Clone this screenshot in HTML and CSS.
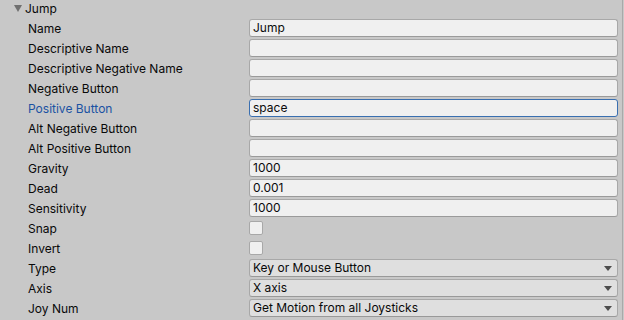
FILE: index.html
```html
<!DOCTYPE html>
<html lang="en">
<head>
  <meta charset="UTF-8" />
  <title>Input Manager - Jump</title>
  <link rel="stylesheet" href="styles.css">
</head>
<body>
  <div class="inspector">
    <div class="panel">
      <!-- Axis foldout -->
      <div class="foldout">
        <span class="foldout-arrow"></span>
        <span>Jump</span>
      </div>

      <div class="prop">
        <label class="prop-label">Name</label>
        <div class="text-field">Jump</div>
      </div>
      <div class="prop">
        <label class="prop-label">Descriptive Name</label>
        <div class="text-field"></div>
      </div>
      <div class="prop">
        <label class="prop-label">Descriptive Negative Name</label>
        <div class="text-field"></div>
      </div>
      <div class="prop">
        <label class="prop-label">Negative Button</label>
        <div class="text-field"></div>
      </div>
      <div class="prop focused">
        <label class="prop-label">Positive Button</label>
        <div class="text-field">space</div>
      </div>
      <div class="prop">
        <label class="prop-label">Alt Negative Button</label>
        <div class="text-field"></div>
      </div>
      <div class="prop">
        <label class="prop-label">Alt Positive Button</label>
        <div class="text-field"></div>
      </div>
      <div class="prop">
        <label class="prop-label">Gravity</label>
        <div class="text-field">1000</div>
      </div>
      <div class="prop">
        <label class="prop-label">Dead</label>
        <div class="text-field">0.001</div>
      </div>
      <div class="prop">
        <label class="prop-label">Sensitivity</label>
        <div class="text-field">1000</div>
      </div>
      <div class="prop">
        <label class="prop-label">Snap</label>
        <div class="toggle"></div>
      </div>
      <div class="prop">
        <label class="prop-label">Invert</label>
        <div class="toggle"></div>
      </div>
      <div class="prop">
        <label class="prop-label">Type</label>
        <div class="popup">Key or Mouse Button<span class="popup-arrow"></span></div>
      </div>
      <div class="prop">
        <label class="prop-label">Axis</label>
        <div class="popup">X axis<span class="popup-arrow"></span></div>
      </div>
      <div class="prop">
        <label class="prop-label">Joy Num</label>
        <div class="popup">Get Motion from all Joysticks<span class="popup-arrow"></span></div>
      </div>
    </div>
  </div>
</body>
</html>
```

FILE: styles.css
```css
body {
  margin: 0;
  background-color: #c8c8c8;
  font-family: Inter, "Noto Sans", sans-serif;
  font-size: 12px;
  color: #090909;
}

.inspector {
  display: flex;
  height: 320px;
  overflow: hidden;
}

.panel {
  width: 622px;
  border-right: 1px solid #a9a9a9;
}

.foldout {
  display: flex;
  align-items: center;
  height: 16px;
  margin-bottom: 2px;
  padding-left: 14px;
  gap: 3px;
}

.foldout-arrow {
  width: 0;
  height: 0;
  border-left: 4px solid transparent;
  border-right: 4px solid transparent;
  border-top: 7px solid #707070;
}

.prop {
  display: flex;
  align-items: center;
  height: 20px;
  padding-right: 4px;
}

.prop-label {
  width: 221px;
  padding-left: 28px;
  flex-shrink: 0;
  white-space: nowrap;
}

.prop.focused .prop-label {
  color: #1b52a3;
}

.text-field {
  flex: 1;
  box-sizing: border-box;
  height: 18px;
  line-height: 16px;
  padding-left: 3px;
  background: #f0f0f0;
  border: 1px solid #a8a8a8;
  border-bottom-color: #9a9a9a;
  border-radius: 3px;
  color: #0b0b0b;
}

.prop.focused .text-field {
  border-color: #3a6fb0;
}

.toggle {
  box-sizing: border-box;
  width: 14px;
  height: 14px;
  background: #f0f0f0;
  border: 1px solid #a8a8a8;
  border-radius: 2px;
}

.popup {
  flex: 1;
  position: relative;
  box-sizing: border-box;
  height: 18px;
  line-height: 16px;
  padding-left: 3px;
  background: #dfdfdf;
  border: 1px solid #a8a8a8;
  border-bottom-color: #999;
  border-radius: 3px;
}

.popup-arrow {
  position: absolute;
  right: 5px;
  top: 6px;
  width: 0;
  height: 0;
  border-left: 4px solid transparent;
  border-right: 4px solid transparent;
  border-top: 5px solid #4d4d4d;
}
```
